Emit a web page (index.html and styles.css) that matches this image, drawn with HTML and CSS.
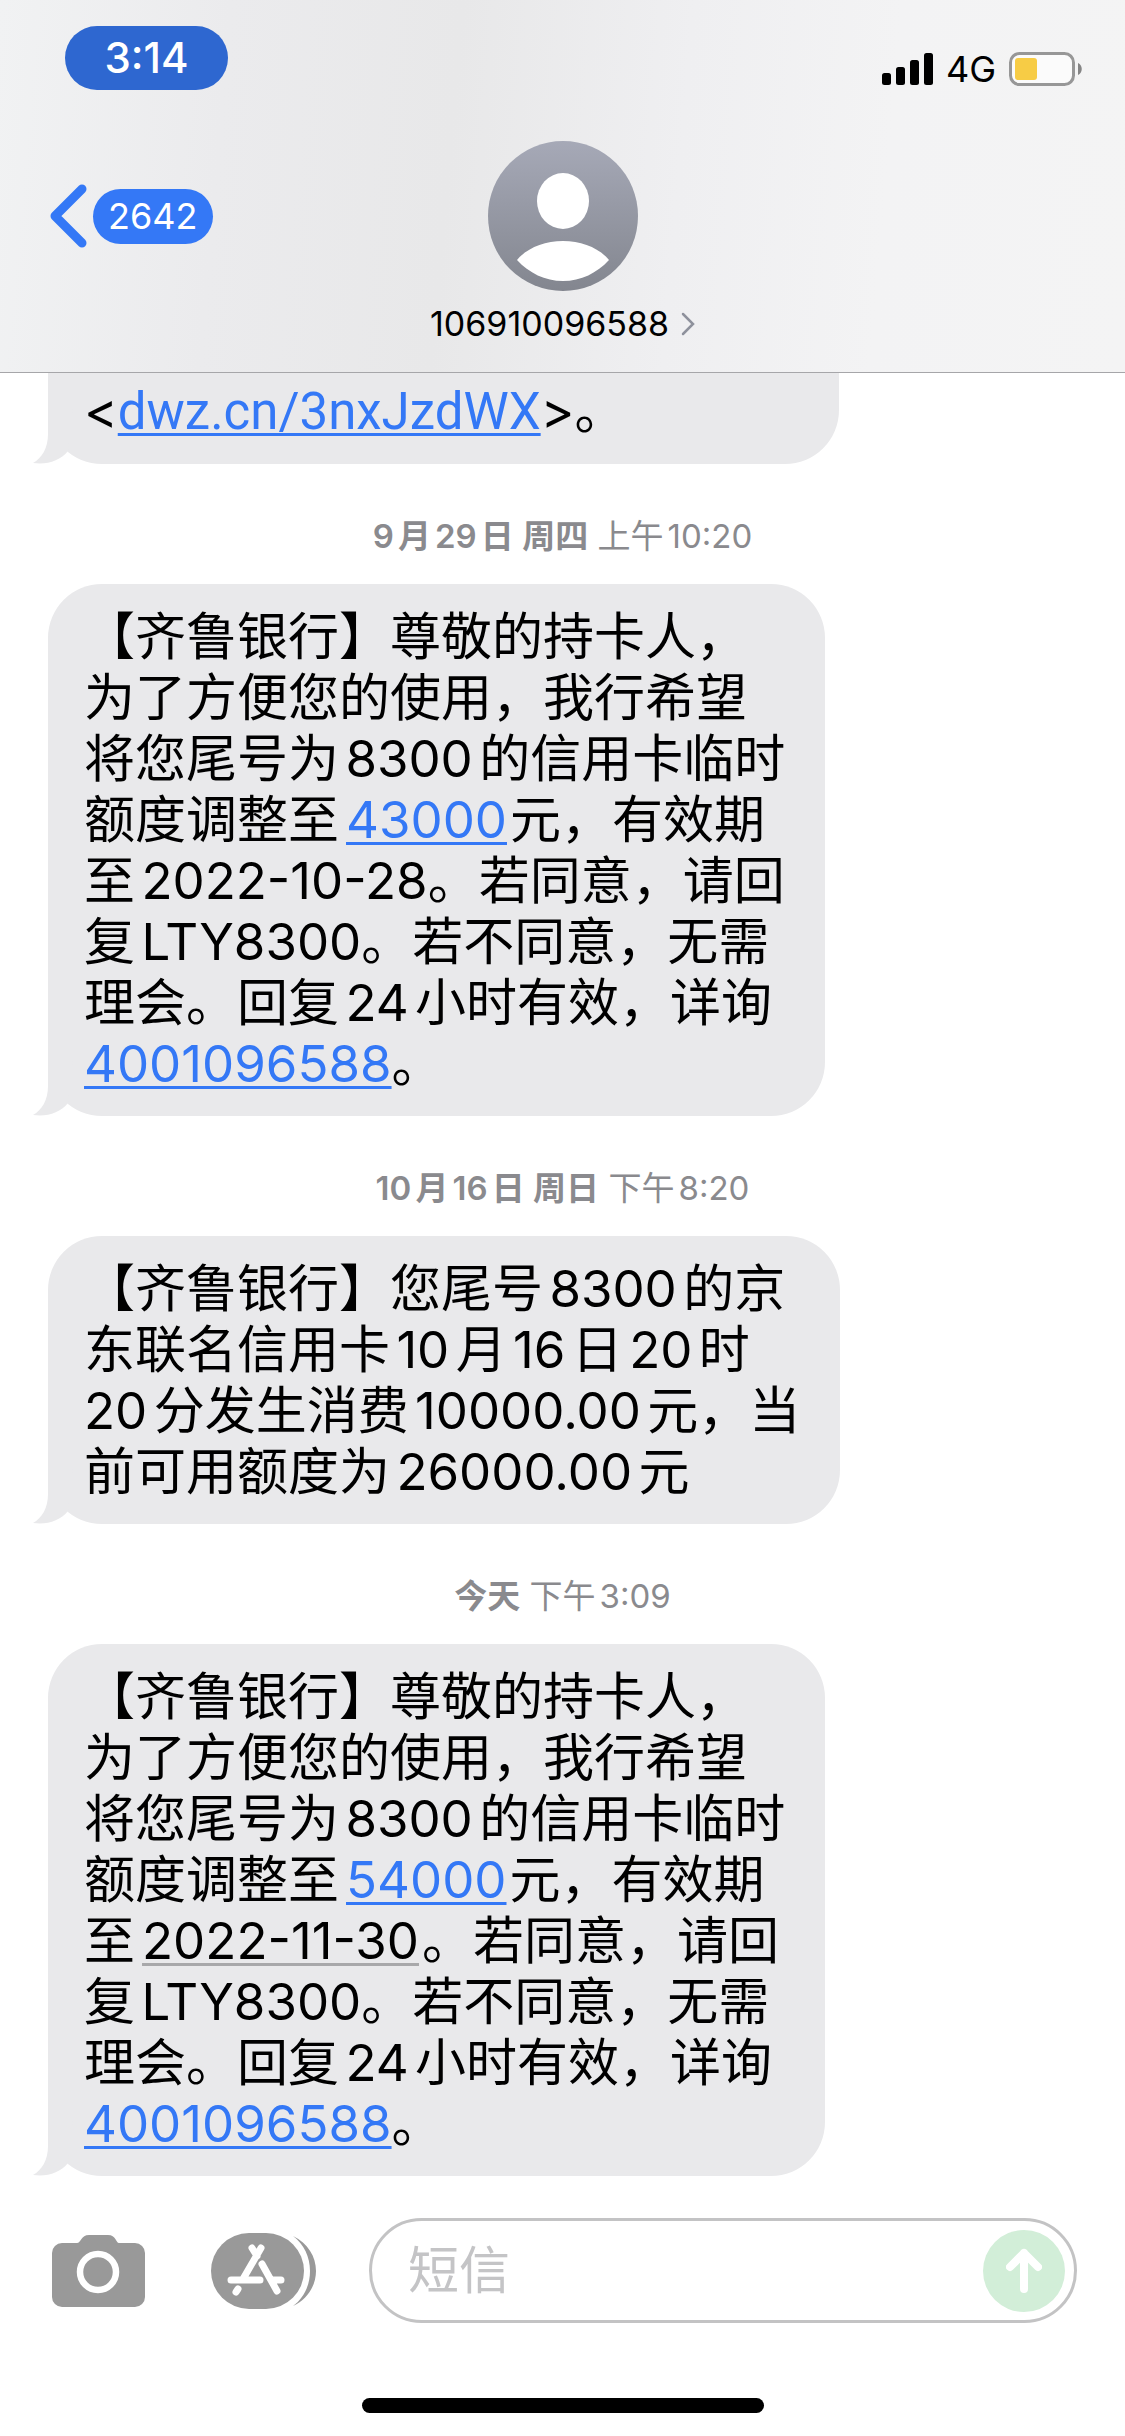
FILE: index.html
```html
<!DOCTYPE html>
<html lang="zh-CN">
<head>
<meta charset="utf-8">
<meta name="viewport" content="width=device-width, initial-scale=1">
<title>106910096588</title>
<link rel="stylesheet" href="styles.css">
</head>
<body>
<div class="screen">
  <header class="header">
    <div class="status">
      <button class="time" type="button">3:14</button>
      <div class="indicators">
        <svg class="signal" width="51" height="32" viewBox="0 0 51 32" aria-label="信号"><rect x="0" y="20" width="9" height="12" rx="2.500"/><rect x="14" y="14" width="9" height="18" rx="2.500"/><rect x="28" y="7" width="9" height="25" rx="2.500"/><rect x="42" y="0" width="9" height="32" rx="2.500"/></svg>
        <span class="network">4G</span>
        <svg class="battery" width="74" height="34" viewBox="0 0 74 34" aria-label="电量"><rect x="1.500" y="1.500" width="63" height="31" rx="9" fill="#fbfbfb" stroke="#979797" stroke-width="3"/><rect x="6" y="6" width="22" height="22" rx="3" fill="#f7cc45"/><path d="M69 11c5 2 5 10 0 12z" fill="#858585"/></svg>
      </div>
    </div>
    <div class="nav">
      <a class="back" href="#" aria-label="返回">
        <svg width="39" height="64" viewBox="0 0 39 64" fill="none" stroke="#3478f6" stroke-width="9" stroke-linecap="round" stroke-linejoin="round"><path d="M32 5 5 32 32 59"/></svg>
        <span class="count">2642</span>
      </a>
      <a class="contact" href="#">
        <svg class="avatar" width="150" height="150" viewBox="0 0 150 150"><defs><linearGradient id="g" x1="0" y1="0" x2="0" y2="1"><stop offset="0" stop-color="#a6a9b7"/><stop offset="1" stop-color="#83868f"/></linearGradient></defs><circle cx="75" cy="75" r="75" fill="url(#g)"/><ellipse cx="75" cy="60" rx="26" ry="28" fill="#fff"/><path d="M29 119C39 107 56 100 75 100s36 7 46 19c-12 13-28 21-46 21s-34-8-46-21z" fill="#fff"/></svg>
        <span class="name">106910096588<svg width="14" height="24" viewBox="0 0 14 24" fill="none" stroke="#8e919c" stroke-width="2.500" stroke-linecap="round"><path d="M2 2 12 12 2 22"/></svg></span>
      </a>
    </div>
  </header>

  <main class="thread">
    <div class="bubble clipped">&lt;<a class="url" href="#">dwz.cn/3nxJzdWX</a>&gt;。<svg class="tail" width="40" height="56" viewBox="0 0 40 56"><path d="M15 0V26C15 40 9 50 0 55 14 57 27 53 35 43L40 0z"/></svg></div>

    <p class="stamp"><b>9月29日 周四</b> 上午10:20</p>
    <div class="bubble">【齐鲁银行】尊敬的持卡人，<br>为了方便您的使用，我行希望<br>将您尾号为8300的信用卡临时<br>额度调整至<a class="inset" href="#">43000</a>元，有效期<br>至2022-10-28。若同意，请回<br>复LTY8300。若不同意，无需<br>理会。回复24小时有效，详询<br><a href="#">4001096588</a>。<svg class="tail" width="40" height="56" viewBox="0 0 40 56"><path d="M15 0V26C15 40 9 50 0 55 14 57 27 53 35 43L40 0z"/></svg></div>

    <p class="stamp"><b>10月16日 周日</b> 下午8:20</p>
    <div class="bubble">【齐鲁银行】您尾号8300的京<br>东联名信用卡10月16日20时<br>20分发生消费10000.00元，当<br>前可用额度为26000.00元<svg class="tail" width="40" height="56" viewBox="0 0 40 56"><path d="M15 0V26C15 40 9 50 0 55 14 57 27 53 35 43L40 0z"/></svg></div>

    <p class="stamp"><b>今天</b> 下午3:09</p>
    <div class="bubble">【齐鲁银行】尊敬的持卡人，<br>为了方便您的使用，我行希望<br>将您尾号为8300的信用卡临时<br>额度调整至<a class="inset" href="#">54000</a>元，有效期<br>至<a class="inset date" href="#">2022-11-30</a>。若同意，请回<br>复LTY8300。若不同意，无需<br>理会。回复24小时有效，详询<br><a href="#">4001096588</a>。<svg class="tail" width="40" height="56" viewBox="0 0 40 56"><path d="M15 0V26C15 40 9 50 0 55 14 57 27 53 35 43L40 0z"/></svg></div>
  </main>

  <footer>
    <form class="composer">
      <button class="tool" type="button" aria-label="相机"><svg width="93" height="72" viewBox="0 0 93 72"><path d="M10 8H25C29 8 29 0 37 0H56C64 0 64 8 67 8H83A10 10 0 0 1 93 18V62A10 10 0 0 1 83 72H10A10 10 0 0 1 0 62V18A10 10 0 0 1 10 8Z" fill="#999"/><circle cx="46" cy="37" r="18" fill="none" stroke="#fff" stroke-width="6.500"/></svg></button>
      <button class="tool" type="button" aria-label="App"><svg width="105" height="76" viewBox="0 0 105 76"><rect width="93" height="76" rx="38" fill="#999"/><path d="M82 3C97 10 105 24 105 38S97 66 82 73C93 65 99 52 99 38S93 11 82 3Z" fill="#999"/><g stroke="#fff" stroke-width="7" stroke-linecap="round" fill="none"><path d="M41 15 46 23M50 15 32 46M20 47H49M62 47H70M51 31 66 58M27 56 25 59"/></g></svg></button>
      <div class="field">
        <input type="text" aria-label="短信" placeholder="短信">
        <button class="send" type="submit" aria-label="发送"><svg width="36" height="46" viewBox="0 0 36 46" fill="none" stroke="#fff" stroke-width="8" stroke-linecap="round" stroke-linejoin="round"><path d="M18 41V5M4 19 18 5 32 19"/></svg></button>
      </div>
    </form>
    <div class="home"></div>
  </footer>
</div>
</body>
</html>
```

FILE: styles.css
```css
* { box-sizing: border-box; }

body {
  margin: 0;
  background: #fff;
  color: #000;
  font-family: Inter, "Noto Sans CJK SC", sans-serif;
  text-autospace: normal;
}

button {
  padding: 0;
  border: 0;
  background: none;
  font: inherit;
}

svg { display: block; flex: none; }
a { color: #3478f6; }

.screen {
  display: flex;
  flex-direction: column;
  min-height: 100vh;
}

/* Header */
.header {
  padding-top: 26px;
  border-bottom: 1px solid #a6a6a9;
  background: linear-gradient(95deg, #f1f2f3 0%, #ebebed 20%, #e8e8e9 40%, #efeff1 60%, #f3f3f4 78%, #f4f4f4 100%);
}

.status {
  display: flex;
  align-items: center;
  justify-content: space-between;
  padding: 0 42px 0 65px;
}

.time {
  width: 163px;
  height: 64px;
  border-radius: 32px;
  background: #2e67d0;
  color: #fff;
  font-size: 42px;
  font-weight: 500;
  line-height: 64px;
}

.indicators {
  display: flex;
  align-items: center;
  gap: 13px;
  padding-top: 22px;
}

.network {
  font-size: 36px;
  line-height: 34px;
}

.nav {
  display: grid;
  grid-template-columns: 1fr auto 1fr;
  padding: 51px 50px 28px;
}

.back {
  display: flex;
  align-items: center;
  gap: 4px;
  height: 150px;
  text-decoration: none;
}

.count {
  padding: 0 15px;
  border-radius: 28px;
  background: #3478f6;
  color: #fff;
  font-size: 36px;
  line-height: 55px;
}

.contact {
  display: flex;
  flex-direction: column;
  align-items: center;
  gap: 13px;
  color: #000;
  text-decoration: none;
}

.name {
  display: flex;
  align-items: center;
  gap: 12px;
  font-size: 34px;
  line-height: 40px;
}

/* Conversation */
.thread {
  display: flex;
  flex: 1;
  flex-direction: column;
  align-items: flex-start;
  padding: 0 48px;
}

.bubble {
  position: relative;
  padding: 22px 40px 22px 36px;
  border-radius: 54px;
  background: #e9e9eb;
  font-size: 51px;
  line-height: 61px;
  white-space: nowrap;
}

.bubble a {
  text-decoration-thickness: 3px;
  text-underline-offset: 4px;
}

.bubble .url { font-family: Roboto, sans-serif; }

.bubble .inset {
  display: inline-block;
  margin: 0 3px 0 7px;
}

.bubble .date {
  color: inherit;
  text-decoration-color: #a8a8aa;
}

.clipped {
  min-width: 791px;
  padding-top: 7px;
  border-top-left-radius: 0;
  border-top-right-radius: 0;
}

.tail {
  position: absolute;
  bottom: 0;
  left: -15px;
  fill: #e9e9eb;
}

.stamp {
  align-self: center;
  margin: 52px 0 28px;
  color: #8a8a8e;
  font-size: 33px;
  line-height: 40px;
}

.stamp b { font-weight: 600; }

/* Composer */
.composer {
  display: flex;
  align-items: center;
  padding: 42px 48px 0 52px;
}

.tool { margin-right: 66px; }
.tool + .tool { margin-right: 53px; }

.field {
  display: flex;
  flex: 1;
  align-items: center;
  min-width: 0;
  height: 105px;
  padding: 0 9px 0 36px;
  border: 3px solid #c3c3c4;
  border-radius: 53px;
}

.field input {
  flex: 1;
  min-width: 0;
  padding: 0;
  border: 0;
  outline: 0;
  background: none;
  font: inherit;
  font-size: 51px;
}

.field input::placeholder { color: #c4c4c6; opacity: 1; }

.send {
  display: grid;
  place-items: center;
  width: 82px;
  height: 82px;
  border-radius: 50%;
  background: #d2eed8;
}

.home {
  width: 402px;
  height: 15px;
  margin: 75px auto 24px;
  border-radius: 8px;
  background: #000;
}
```
